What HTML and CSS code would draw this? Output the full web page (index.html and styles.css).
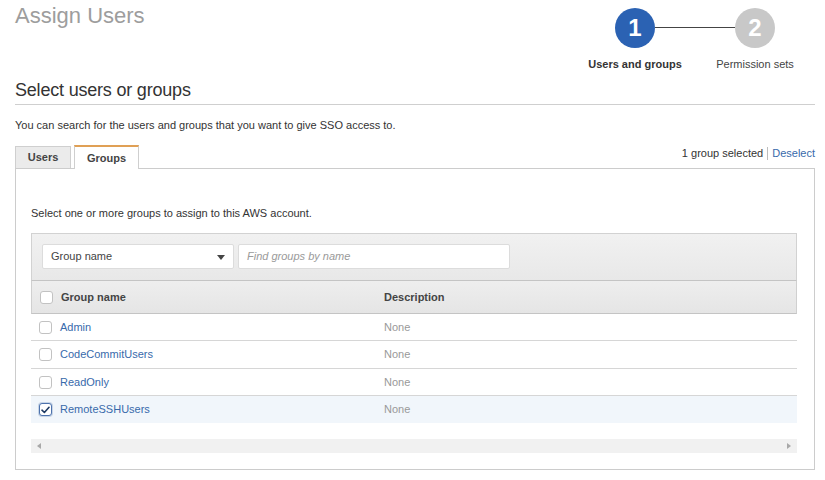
FILE: index.html
```html
<!DOCTYPE html>
<html>
<head>
<meta charset="utf-8">
<link rel="stylesheet" href="styles.css">
</head>
<body>
<div class="page">
  <header class="top">
    <h1 class="title">Assign Users</h1>
    <div class="stepper">
      <div class="circle active">1</div>
      <div class="connector"></div>
      <div class="circle">2</div>
      <div class="step-label active">Users and groups</div>
      <div></div>
      <div class="step-label">Permission sets</div>
    </div>
  </header>

  <h2 class="section-title">Select users or groups</h2>
  <p class="intro">You can search for the users and groups that you want to give SSO access to.</p>

  <div class="tabbar">
    <div class="tabs">
      <div class="tab">Users</div>
      <div class="tab current">Groups</div>
    </div>
    <div class="selection">
      <span>1 group selected</span><span class="sep"></span><a class="link" href="#">Deselect</a>
    </div>
  </div>

  <div class="panel">
    <p class="hint">Select one or more groups to assign to this AWS account.</p>

    <div class="grid">
      <div class="filter">
        <div class="select">
          <span>Group name</span>
          <span class="caret"></span>
        </div>
        <div class="search">Find groups by name</div>
      </div>

      <div class="row head">
        <div class="cell first"><span class="cb"></span><span>Group name</span></div>
        <div class="cell">Description</div>
      </div>

      <div class="row">
        <div class="cell first"><span class="cb"></span><a class="link" href="#">Admin</a></div>
        <div class="cell muted">None</div>
      </div>
      <div class="row tall">
        <div class="cell first"><span class="cb"></span><a class="link" href="#">CodeCommitUsers</a></div>
        <div class="cell muted">None</div>
      </div>
      <div class="row">
        <div class="cell first"><span class="cb"></span><a class="link" href="#">ReadOnly</a></div>
        <div class="cell muted">None</div>
      </div>
      <div class="row selected last">
        <div class="cell first">
          <span class="cb checked"><svg width="9" height="8" viewBox="0 0 9 8"><path d="M1 4.2 L3.4 6.5 L8 1.3" fill="none" stroke="#1e3a63" stroke-width="1.6" stroke-linecap="round" stroke-linejoin="round"/></svg></span>
          <a class="link" href="#">RemoteSSHUsers</a>
        </div>
        <div class="cell muted">None</div>
      </div>

      <div class="hscroll">
        <span class="arr left"></span>
        <span class="arr right"></span>
      </div>
    </div>
  </div>
</div>
</body>
</html>
```

FILE: styles.css
```css
* { box-sizing: border-box; }
html, body { margin: 0; padding: 0; background: #fff; }
body {
  font-family: "Liberation Sans", Arial, sans-serif;
  font-size: 11px;
  line-height: 13px;
  color: #333;
}
.page {
  width: 825px;
  padding: 3px 10px 0 15px;
}
.top {
  display: flex;
  justify-content: space-between;
  align-items: flex-start;
  height: 68px;
}
.title {
  margin: 0;
  font-size: 22px;
  line-height: 25px;
  font-weight: normal;
  color: #9d9d9d;
}
.stepper {
  display: grid;
  grid-template-columns: 40px 80px 40px;
  grid-template-rows: 40px 13px;
  row-gap: 10px;
  margin-top: 5px;
  margin-right: 40px;
}
.circle {
  width: 40px;
  height: 40px;
  border-radius: 50%;
  background: #c8c8c8;
  color: #fff;
  font-weight: bold;
  font-size: 24px;
  line-height: 40px;
  text-align: center;
}
.circle.active { background: #2b62b3; }
.connector {
  align-self: center;
  height: 1px;
  margin-top: -1px;
  background: #444;
}
.step-label {
  justify-self: center;
  white-space: nowrap;
  color: #444;
}
.step-label.active { font-weight: bold; color: #333; }

.section-title {
  margin: 9px 0 0;
  font-size: 18px;
  line-height: 21px;
  font-weight: normal;
  color: #333;
  padding-bottom: 3px;
  border-bottom: 1px solid #cfcfcf;
  letter-spacing: -0.2px;
}
.intro {
  margin: 14px 0 0;
}
.tabbar {
  display: flex;
  justify-content: space-between;
  align-items: flex-start;
  margin-top: 13px;
  margin-bottom: -1px;
  height: 24px;
  position: relative;
  z-index: 1;
}
.tabs {
  display: flex;
  gap: 3px;
  align-items: flex-start;
}
.tab {
  height: 22px;
  margin-top: 1px;
  width: 56px;
  border: 1px solid #cfcfcf;
  border-bottom: none;
  background: #ebebeb;
  font-weight: bold;
  color: #444;
  text-align: center;
  line-height: 21px;
}
.tab.current {
  width: 65px;
  height: 24px;
  margin-top: 0;
  background: #fff;
  border-top: 2px solid #e0a055;
  line-height: 22px;
}
.selection {
  display: flex;
  align-items: center;
  margin-top: 2px;
  color: #333;
}
.sep {
  display: inline-block;
  width: 1px;
  height: 13px;
  background: #bdbdbd;
  margin: 0 4px 0 4px;
}
.link {
  color: #386aab;
  text-decoration: none;
}

.panel {
  width: 800px;
  height: 302px;
  border: 1px solid #cccccc;
  padding: 38px 17px 0 15px;
}
.hint {
  margin: 0;
}
.grid {
  margin-top: 13px;
}
.filter {
  display: flex;
  gap: 4px;
  height: 48px;
  padding: 10px 10px 0;
  background: linear-gradient(#f1f1f1, #e8e8e8);
  border: 1px solid #d2d2d2;
  border-bottom: 1px solid #c4c4c4;
}
.select {
  width: 192px;
  height: 25px;
  background: #fff;
  border: 1px solid #dcdcdc;
  border-radius: 2px;
  display: flex;
  justify-content: space-between;
  align-items: center;
  padding: 0 8px 0 8px;
  color: #444;
}
.caret {
  width: 0;
  height: 0;
  border-left: 4.5px solid transparent;
  border-right: 4.5px solid transparent;
  border-top: 5px solid #444;
  margin-top: 1px;
}
.search {
  width: 272px;
  height: 25px;
  background: #fff;
  border: 1px solid #dcdcdc;
  border-radius: 2px;
  padding: 0 8px;
  line-height: 23px;
  font-style: italic;
  color: #9a9a9a;
}
.row {
  display: grid;
  grid-template-columns: 345px 1fr;
  height: 27px;
  border-bottom: 1px solid #d6d6d6;
  align-items: center;
}
.row.tall { height: 28px; }
.row.head {
  height: 33px;
  border: 1px solid #d0d0d0;
  border-top: none;
  border-bottom: 1px solid #c4c4c4;
  background: linear-gradient(#eeeeee, #e5e5e5);
  font-weight: bold;
  color: #444;
}
.row.head .cell.first { padding-left: 8px; }
.row.head .cell:not(.first) { padding-left: 7px; }
.cell {
  padding-left: 8px;
  white-space: nowrap;
}
.cell.first {
  display: flex;
  align-items: center;
  gap: 8px;
  padding-left: 8px;
}
.muted { color: #999; }
.row.selected { background: #f1f6fb; }
.row.last { border-bottom: none; height: 27px; }
.cb {
  width: 13px;
  height: 13px;
  border: 1px solid #c2c2c2;
  border-radius: 3px;
  background: #fff;
  display: inline-flex;
  align-items: center;
  justify-content: center;
  flex: none;
}
.cb.checked {
  border-color: #4d72ad;
  box-shadow: 0 0 0 1px rgba(77,114,173,0.25);
}
.hscroll {
  margin-top: 16px;
  height: 14px;
  background: #f1f1f1;
  display: flex;
  justify-content: space-between;
  align-items: center;
  padding: 0 6px;
}
.arr {
  width: 0;
  height: 0;
  border-top: 3.5px solid transparent;
  border-bottom: 3.5px solid transparent;
}
.arr.left { border-right: 4px solid #a8a8a8; }
.arr.right { border-left: 4px solid #a8a8a8; }
```
